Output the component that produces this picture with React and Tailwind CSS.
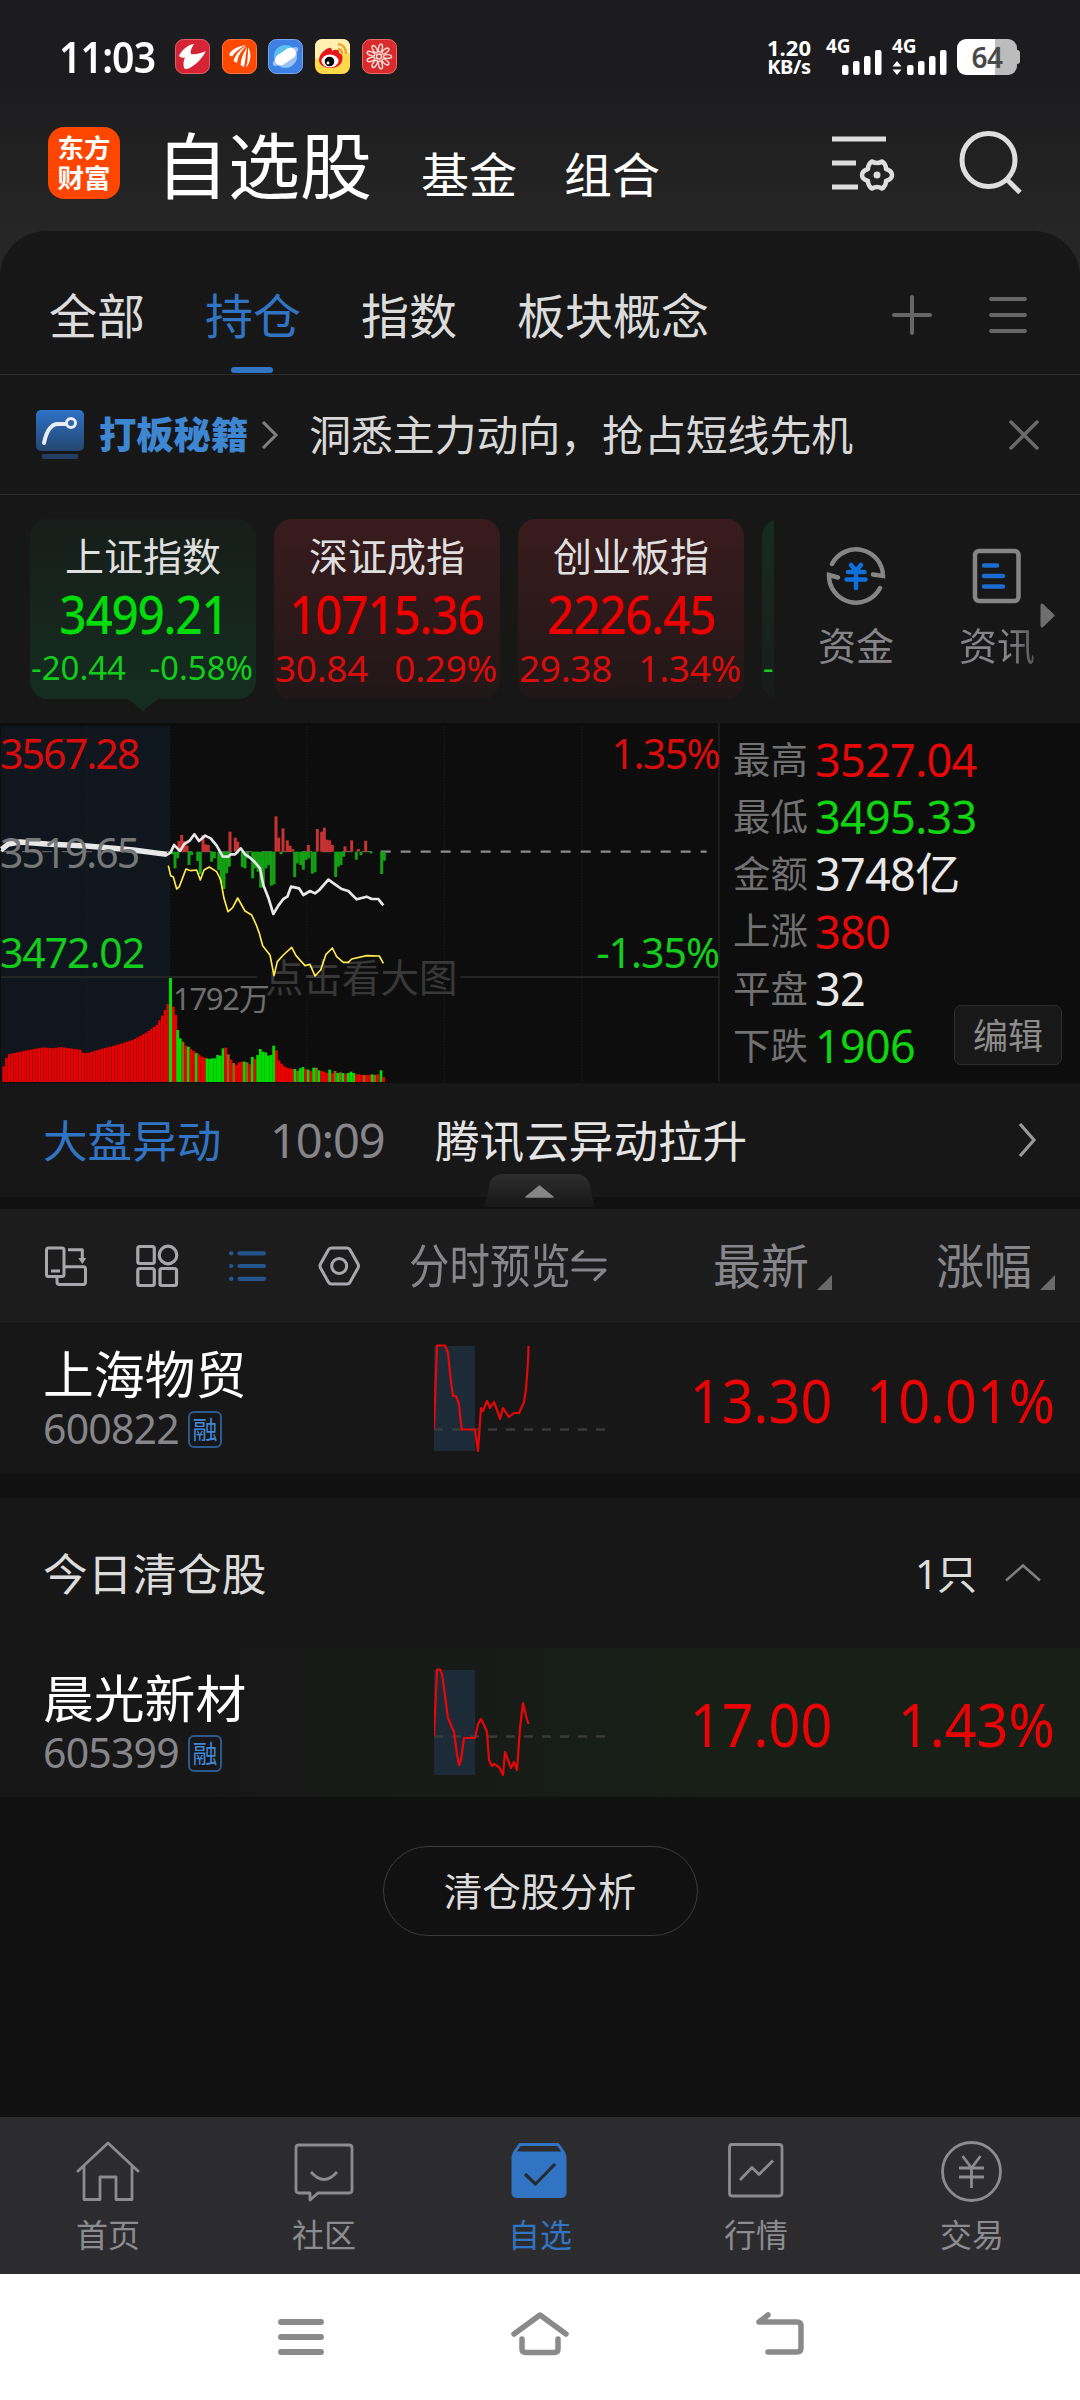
import React from "react";

const VOLUME_PRE = [
  [8, 1065], [16, 1035], [25, 1018], [80, 1006], [130, 997], [160, 1000], [180, 996], [240, 1004],
  [252, 1016], [270, 1012], [300, 1003], [350, 990], [400, 974], [440, 952], [470, 930], [490, 896], [506, 860],
];

const VOLUME = [
  [520, 875, "r"], [527, 900, "r"], [533, 945, "g"], [541, 970, "g"], [549, 980, "m"], [557, 992, "r"], [565, 995, "g"],
  [573, 1002, "r"], [581, 1008, "r"], [589, 1014, "g"], [597, 1018, "r"], [605, 1025, "r"], [613, 1028, "r"],
  [621, 1030, "g"], [629, 1032, "g"], [637, 1030, "g"], [645, 1030, "g"], [653, 1020, "g"], [661, 1022, "g"],
  [669, 1000, "g"], [677, 998, "r"], [685, 1018, "m"], [693, 1034, "r"], [701, 1044, "m"], [709, 1050, "r"],
  [717, 1042, "r"], [725, 1040, "r"], [733, 1040, "g"], [741, 1042, "m"], [749, 1048, "r"], [757, 1026, "g"],
  [765, 1032, "r"], [773, 1020, "g"], [781, 1002, "g"], [789, 1010, "g"], [797, 1012, "g"], [805, 1022, "g"],
  [813, 1020, "g"], [821, 992, "g"], [829, 1006, "r"], [837, 1036, "r"], [845, 1046, "r"], [853, 1054, "r"],
  [861, 1058, "r"], [869, 1060, "r"], [877, 1062, "r"], [885, 1062, "g"], [893, 1068, "m"], [901, 1060, "g"],
  [909, 1056, "g"], [917, 1062, "r"], [925, 1064, "g"], [933, 1068, "r"], [941, 1058, "g"], [949, 1058, "m"],
  [957, 1066, "g"], [965, 1068, "r"], [973, 1070, "r"], [981, 1074, "r"], [989, 1064, "g"], [997, 1074, "r"],
  [1005, 1068, "m"], [1013, 1074, "g"], [1021, 1072, "m"], [1029, 1074, "g"], [1037, 1076, "r"], [1045, 1074, "g"],
  [1053, 1070, "g"], [1061, 1074, "g"], [1069, 1078, "r"], [1077, 1078, "r"], [1085, 1080, "r"], [1093, 1080, "m"],
  [1101, 1080, "r"], [1109, 1080, "r"], [1117, 1078, "g"], [1125, 1080, "m"], [1133, 1078, "r"], [1143, 1066, "g"],
  [1151, 1086, "r"],
];

const VOLUME_COLORS = { r: "#ee0000", g: "#00dd00", m: "#8a6a18" };

const FLOW_UP = [
  [537, 378], [545, 360], [553, 378], [561, 392], [609, 360], [617, 388], [625, 390], [690, 350], [706, 368], [713, 380],
  [828, 304], [836, 368], [849, 340], [862, 376], [870, 392], [878, 402], [925, 390], [952, 342], [965, 350],
  [973, 338], [981, 374], [989, 376], [997, 390], [1035, 394], [1055, 376], [1075, 402], [1097, 377],
];

const FLOW_DOWN = [
  [517, 418], [525, 460], [533, 430], [567, 450], [575, 420], [593, 438], [601, 478], [635, 440], [643, 430],
  [656, 465], [664, 505], [672, 522], [680, 475], [688, 455], [712, 416], [727, 456], [735, 460], [743, 430], [758, 490],
  [766, 460], [774, 470], [782, 518], [790, 518], [798, 460], [806, 450], [814, 512], [822, 508], [843, 418],
  [884, 486], [892, 445], [902, 450], [910, 464], [918, 435], [926, 430], [937, 476], [945, 472], [1007, 486],
  [1015, 455], [1023, 450], [1031, 425], [1069, 434], [1083, 420], [1113, 415], [1145, 477], [1153, 437],
];

const WHITE_LINE =
  "5,410 12,395 25,385 60,380 100,382 140,387 200,390 260,391 330,398 400,404 450,410 500,420 512,412 522,390 530,398 540,408 552,388 570,376 583,358 597,378 615,362 632,370 650,392 668,424 685,425 692,418 705,418 722,400 735,418 750,428 765,442 780,460 790,510 805,548 820,597 835,572 850,552 862,545 873,515 897,520 910,540 930,528 945,535 958,525 985,494 1005,508 1025,522 1045,528 1070,553 1100,545 1115,552 1135,552 1150,571";

const YELLOW_LINE =
  "505,452 512,482 520,486 530,522 538,515 558,462 572,467 590,465 601,495 612,465 628,456 650,470 662,495 672,550 684,590 698,578 713,549 735,588 755,600 768,628 778,655 788,692 810,720 822,782 832,740 850,720 875,697 888,722 915,752 930,748 945,783 962,765 978,718 997,699 1010,725 1030,742 1045,742 1055,732 1100,722 1138,723 1150,745";

const STATS = [
  { label: "最高", value: "3527.04", color: "text-[#e60808]" },
  { label: "最低", value: "3495.33", color: "text-[#0fd40f]" },
  { label: "金额", value: "3748亿", color: "text-[#e8e8e8]" },
  { label: "上涨", value: "380", color: "text-[#e60808]" },
  { label: "平盘", value: "32", color: "text-[#e8e8e8]" },
  { label: "下跌", value: "1906", color: "text-[#0fd40f]" },
];

const preVolumeAt = (x) => {
  for (let i = 1; i < VOLUME_PRE.length; i++) {
    const [x0, y0] = VOLUME_PRE[i - 1];
    const [x1, y1] = VOLUME_PRE[i];
    if (x <= x1) return y0 + ((y1 - y0) * (x - x0)) / (x1 - x0);
  }
  return 860;
};

const Signal = () => (
  <svg width="40" height="25" viewBox="0 0 40 25" fill="#fff">
    <rect x="0" y="15" width="6.5" height="10" rx="2" />
    <rect x="11" y="11" width="6.5" height="14" rx="2" />
    <rect x="22" y="6" width="6.5" height="19" rx="2" />
    <rect x="33" y="0" width="6.5" height="25" rx="2" />
  </svg>
);

const AppBadges = () => (
  <div className="ml-[17px] flex gap-[11.7px]">
    <svg width="35" height="35" viewBox="0 0 35 35">
      <rect x=".5" y=".5" width="34" height="34" rx="8" fill="#d42435" stroke="#e0606c" />
      <path d="M19 5 C12 6 6 12 4 17 C6 19 9 19 10 18 C8 23 8 28 10 30 C15 31 26 22 31 12 C27 14 20 16 16 15 C15 12 17 8 19 5z" fill="#fff" />
    </svg>
    <svg width="35" height="35" viewBox="0 0 35 35">
      <rect x=".5" y=".5" width="34" height="34" rx="8" fill="#ff4800" stroke="#ff7a45" />
      <path d="M24 6 C17 7 9 10 7 16 L10 17.500 C13 13 18 9 24 6z M24.500 7 C18 10 13 16 11.500 22 L15 24 C16 17 19 12 24.500 7z M25 8 C22 13 19 19 18.500 26 L22 28 C23.500 21 24 14 25 8z M26 8 C26 15 26 22 24 29 C29 23 30 14 26 8z" fill="#fff" />
    </svg>
    <svg width="35" height="35" viewBox="0 0 35 35">
      <rect x=".5" y=".5" width="34" height="34" rx="8" fill="#3f80e4" stroke="#76a6ee" />
      <circle cx="17.500" cy="17.500" r="11.500" fill="#5bc0ee" />
      <path d="M8 23 A11.500 11.500 0 0 0 28.500 20 L29 14z" fill="#9fc0f4" />
      <ellipse cx="17.500" cy="17.500" rx="15" ry="5" transform="rotate(-34 17.500 17.500)" fill="#9fc0f4" />
      <rect x="6" y="12" width="23" height="11" rx="5.500" transform="rotate(-34 17.500 17.500)" fill="#fff" />
    </svg>
    <svg width="35" height="35" viewBox="0 0 35 35">
      <rect width="35" height="35" rx="8" fill="#ffd94a" />
      <path d="M0 20 V8 Q0 0 8 0 H27 Q35 0 35 8 V14z" fill="#ffefb0" />
      <path d="M4 21 C4 15 10 10 14 9 C17 8 17 11 17 12 C20 10 25 10 24 14 C28 15 28 19 27 22 C25 32 4 31 4 21z" fill="#e6161b" />
      <ellipse cx="15" cy="22" rx="8.500" ry="6.500" fill="#fff" />
      <circle cx="14.500" cy="22.500" r="4.800" fill="#000" />
      <circle cx="13" cy="24" r="1.400" fill="#fff" />
      <path d="M23 5 Q31 6 31 15 M23 10 Q27 10 27 15" stroke="#f2a52a" strokeWidth="2.500" fill="none" />
    </svg>
    <svg width="35" height="35" viewBox="0 0 35 35">
      <rect x=".5" y=".5" width="34" height="34" rx="8" fill="#d92b2d" stroke="#ee6a66" />
      <g fill="none" stroke="#ffe3dc" strokeWidth="1.400">
        {[10, 50, 90, 130, 170, 210, 250, 290, 330].map((a) => (
          <ellipse key={a} cx="17" cy="9" rx="1.900" ry="4" transform={`rotate(${a} 17 17.500)`} />
        ))}
        <circle cx="17" cy="17.500" r="2.500" />
      </g>
    </svg>
  </div>
);

const StatusBar = () => (
  <div className="flex h-[113px] items-center pl-[59px] pr-[60px] text-white">
    <span className="w-[99px]">
      <span className="inline-block origin-left scale-x-[0.91] whitespace-nowrap text-[43px] font-semibold leading-none tracking-[-0.9px]">
        11:03
      </span>
    </span>
    <AppBadges />
    <div className="ml-auto flex items-center">
      <div className="w-[44px] whitespace-nowrap text-center text-[22px] font-bold leading-[20px]">
        <div>1.20</div>
        <div className="text-[20px] tracking-[-0.3px]">KB/s</div>
      </div>
      <div className="ml-[15px] flex h-[36px] w-[56px] items-start">
        <span className="w-[24px] text-[19px] font-bold leading-[15px]">4G</span>
        <div className="-ml-[8px] mt-[11px]">
          <Signal />
        </div>
      </div>
      <div className="ml-[10px] flex h-[36px] w-[55px] items-start">
        <span className="w-[24px] text-[19px] font-bold leading-[15px]">4G</span>
        <svg className="-ml-[24px] mr-[5px] mt-[22px] shrink-0" width="10" height="14" viewBox="0 0 10 14" fill="#fff">
          <path d="M5 0 L9.500 5.500 H.5z M5 14 L.5 8.500 H9.500z" />
        </svg>
        <div className="mt-[11px] shrink-0">
          <Signal />
        </div>
      </div>
      <div className="ml-[10px] flex items-center">
        <div className="flex h-[36px] w-[60px] items-center justify-center rounded-[9px] bg-[linear-gradient(90deg,#fff_63%,#bcbcbc_63%)] text-[28px] font-semibold leading-none tracking-[-0.5px] text-[#484848]">
          64
        </div>
        <div className="h-[14px] w-[3px] rounded-r-[3px] bg-[#bcbcbc]" />
      </div>
    </div>
  </div>
);

const Header = () => (
  <div className="flex h-[118px] items-start pl-[48px] pr-[57px] text-white">
    <div className="mt-[14px] flex size-[72px] flex-col items-center justify-center rounded-[16px] bg-[#ff4600] text-[26.5px] font-bold leading-[30px]">
      <span>东方</span>
      <span>财富</span>
    </div>
    <span className="ml-[36px] mt-[12px] text-[72px] leading-[80px]">自选股</span>
    <span className="ml-[49px] mt-[37px] text-[48px] leading-[50px]">基金</span>
    <span className="ml-[47px] mt-[37px] text-[48px] leading-[50px]">组合</span>
    <svg className="ml-auto mt-[20px]" width="66" height="62" viewBox="0 0 66 62" fill="none" stroke="#dedede" strokeWidth="5">
      <path d="M0 6 H54 M0 30 H24 M0 54 H26" />
      <path
        d="M36 36 Q36 31 40 28.500 Q45 31.500 50 28.500 Q54 31 54 36 Q60 38 60 42 Q60 46 54 48 Q54 53 50 55.500 Q45 52.500 40 55.500 Q36 53 36 48 Q30 46 30 42 Q30 38 36 36z"
        strokeWidth="4.500"
        strokeLinejoin="round"
      />
      <circle cx="45" cy="42" r="3.500" fill="#dedede" stroke="none" />
    </svg>
    <svg className="ml-[61px] mt-[16px]" width="64" height="66" viewBox="0 0 64 66" fill="none" stroke="#dedede" strokeWidth="5">
      <circle cx="29.500" cy="31" r="26.500" />
      <path d="M47.500 50 L61 63.500" />
    </svg>
  </div>
);

const Tabs = () => (
  <div className="flex h-[144px] items-center gap-[60px] border-b border-[#2e2e2e] pl-[49px] pr-[53px] text-[48px] leading-none text-[#dcdcdc]">
    <span className="-mt-[2px] pt-[28px]">全部</span>
    <span className="relative -mt-[2px] pt-[28px] text-[#3174c4]">
      持仓
      <span className="absolute bottom-[-33px] left-[26px] h-[6px] w-[42px] rounded-[3px] bg-[#3174c4]" />
    </span>
    <span className="-mt-[2px] pt-[28px]">指数</span>
    <span className="-mt-[2px] pt-[28px]">板块概念</span>
    <div className="ml-auto mt-[24px] flex items-center gap-[57px]">
      <svg width="40" height="40" viewBox="0 0 40 40" stroke="#666" strokeWidth="4" strokeLinecap="round">
        <path d="M2 20 H38 M20 2 V38" />
      </svg>
      <svg width="38" height="40" viewBox="0 0 38 40" stroke="#666" strokeWidth="4" strokeLinecap="round">
        <path d="M2 4 H36 M2 20 H36 M2 36 H36" />
      </svg>
    </div>
  </div>
);

const Promo = () => (
  <div className="flex h-[120px] items-center border-b border-[#2a2a2a] pl-[36px] pr-[41px]">
    <svg width="48" height="50" viewBox="0 0 48 50">
      <defs>
        <linearGradient id="promo" x1="0" y1="0" x2="0" y2="1">
          <stop offset="0" stopColor="#2d72c8" />
          <stop offset="1" stopColor="#25466f" />
        </linearGradient>
      </defs>
      <rect width="48" height="41" rx="5" fill="url(#promo)" />
      <path d="M8 33 Q12 14 22 14 H30" fill="none" stroke="#e8eef6" strokeWidth="4" strokeLinecap="round" />
      <circle cx="35" cy="13" r="4.500" fill="none" stroke="#e8eef6" strokeWidth="3" />
      <rect x="6" y="44" width="36" height="5" rx="1.500" fill="#223f63" />
    </svg>
    <span className="ml-[15px] text-[37.3px] font-black leading-none text-[#3c86d2]">打板秘籍</span>
    <svg className="ml-[13px]" width="18" height="28" viewBox="0 0 18 28" fill="none" stroke="#808080" strokeWidth="3">
      <path d="M2 1 L15 14 L2 27" />
    </svg>
    <span className="ml-[30px] text-[41.85px] leading-none text-[#d8d8d8]">洞悉主力动向，抢占短线先机</span>
    <svg className="ml-auto" width="30" height="30" viewBox="0 0 30 30" stroke="#6a6a6a" strokeWidth="3.500" strokeLinecap="round">
      <path d="M2 2 L28 28 M28 2 L2 28" />
    </svg>
  </div>
);

const IndexCard = ({ name, price, change, percent, up, active }) => (
  <div
    className={
      "relative flex h-[180px] w-[226px] shrink-0 flex-col items-center rounded-[18px] bg-linear-to-b whitespace-nowrap " +
      (up ? "from-[#3a1b1d] to-[#211718]" : active ? "from-[#171d1a] to-[#142d20]" : "from-[#142d20] to-[#171d1a]")
    }
  >
    <span className="mt-[17px] h-[40px] text-[39px] leading-[40px] text-[#dfdfdf]">{name}</span>
    <span
      className={
        "mt-[12px] h-[52px] scale-x-[0.92] text-[52px] font-medium leading-[52px] tracking-[-1.4px] " +
        (up ? "text-[#ec0000]" : "text-[#00dc0a]")
      }
    >
      {price}
    </span>
    <div
      className={
        "mt-[8px] flex w-full justify-between pl-[1px] pr-[3px] leading-[40px] " +
        (up ? "text-[37px] tracking-[-0.3px] text-[#d90c0c]" : "text-[33px] text-[#14cc1c]")
      }
    >
      <span>{change}</span>
      <span>{percent}</span>
    </div>
    {active && (
      <svg className="absolute left-[98px] top-[180px]" width="30" height="12" viewBox="0 0 30 12">
        <path d="M0 0 H30 L15 12z" fill="#142d20" />
      </svg>
    )}
  </div>
);

const IndexStrip = () => (
  <div className="flex h-[228px] items-start pt-[24px]">
    <div className="flex h-[200px] w-[774px] shrink-0 gap-[18px] overflow-hidden pl-[30px]">
      <IndexCard name="上证指数" price="3499.21" change="-20.44" percent="-0.58%" active />
      <IndexCard name="深证成指" price="10715.36" change="30.84" percent="0.29%" up />
      <IndexCard name="创业板指" price="2226.45" change="29.38" percent="1.34%" up />
      <IndexCard name="" price="" change="-" percent="" />
    </div>
    <div className="ml-[43px] mt-[26px] flex w-[78px] flex-col items-center text-[38px] leading-[40px] text-[#858589]">
      <svg width="60" height="62" viewBox="0 0 60 62" fill="none" stroke="#858585" strokeWidth="4.500" strokeLinecap="round">
        <path d="M6 19 A27 27 0 0 1 57 31 L47 29.500" />
        <path d="M54 43 A27 27 0 0 1 3 30 L12 32.500" />
        <path d="M25 20 L30 26 L35 20 M22 27 H38.500 M20.500 34.500 H39.500 M30 26 V43" stroke="#0f70dc" />
      </svg>
      <span className="mt-[18px]">资金</span>
    </div>
    <div className="ml-[63px] mt-[26px] flex w-[78px] flex-col items-center text-[38px] leading-[40px] text-[#858589]">
      <svg width="50" height="62" viewBox="0 0 50 62" fill="none" strokeWidth="4.500" strokeLinecap="round">
        <rect x="3" y="6" width="43.500" height="50" rx="4" stroke="#858585" />
        <path d="M12 20.500 H25 M12 31 H31 M12 41.500 H31" stroke="#1a6cd0" />
      </svg>
      <span className="mt-[18px] bg-linear-to-r from-[#858589] from-65% to-[#555558] bg-clip-text text-transparent">资讯</span>
    </div>
    <svg className="ml-[4px] mt-[84px] shrink-0" width="15" height="25" viewBox="0 0 15 25">
      <path d="M2 2 L13 12.500 L2 23z" fill="#6e6e6e" stroke="#6e6e6e" strokeWidth="3" strokeLinejoin="round" />
    </svg>
  </div>
);

const MarketChart = () => {
  const preBars = [];
  for (let x = 11; x < 506; x += 8.2) preBars.push([x, preVolumeAt(x)]);

  return (
    <div className="relative h-[359px] w-[720px] shrink-0 border-r-2 border-[#1c1c1c]">
      <svg className="absolute left-0 top-0" width="720" height="359" viewBox="0 24 2160 1077">
        <rect x="3" y="34" width="506" height="1067" fill="#10161e" />
        <g stroke="#272727" strokeWidth="3" strokeDasharray="3 6">
          <path d="M260 34 V1101 M509 34 V1101 M921 34 V720 M921 856 V1101 M1333 34 V1101 M1746 34 V1101" />
        </g>
        <path d="M3 786 H770 M1382 786 H2157" stroke="#242424" strokeWidth="6" />
        <path d="M6 410 H1150" stroke="#5b5b5b" strokeWidth="4" strokeDasharray="30 30" />
        <path d="M1142 410 H2120" stroke="#8c8c8c" strokeWidth="7" strokeDasharray="30 30" />
        {FLOW_UP.map(([x, y]) => (
          <rect key={x} x={x - 4.5} y={y} width="9" height={410 - y} fill="#c83232" />
        ))}
        {FLOW_DOWN.map(([x, y]) => (
          <rect key={x} x={x - 4.5} y="410" width="9" height={y - 410} fill="#14a014" />
        ))}
        {preBars.map(([x, y]) => (
          <rect key={x} x={x - 3.7} y={y} width="7.400" height={1101 - y} fill="#ee0000" />
        ))}
        {VOLUME.map(([x, y, c]) => (
          <rect key={x} x={x - 4.2} y={y} width="8.400" height={1101 - y} fill={VOLUME_COLORS[c]} />
        ))}
        <rect x="507" y="789" width="9" height="312" fill="#00dd00" />
      </svg>
      <span className="absolute left-[265px] top-[234px] text-[38.5px] leading-[40px] text-[#383838]">点击看大图</span>
      <span className="absolute left-[173px] top-[258px] text-[31px] leading-[34px] tracking-[-1.3px] text-[#6e6e6e]">1792万</span>
      <svg className="absolute left-0 top-0" width="720" height="359" viewBox="0 24 2160 1077" fill="none" strokeLinejoin="round">
        <polyline points="5,403 25,387 60,381 140,387 260,393 400,405 500,418" stroke="#e8e8e8" strokeWidth="16" />
        <polyline points={WHITE_LINE} stroke="#e8e8e8" strokeWidth="8" />
        <polyline points={YELLOW_LINE} stroke="#ffe94e" strokeWidth="5" />
      </svg>
      <div className="absolute left-0 top-0 text-[41px] leading-[40px] tracking-[-1.9px]">
        <span className="absolute left-0 top-[10px] text-[#d90c0c]">3567.28</span>
        <span className="absolute left-0 top-[109px] text-[#777]">3519.65</span>
        <span className="absolute left-0 top-[209px] tracking-[-1.1px] text-[#14cc1c]">3472.02</span>
      </div>
      <div className="absolute right-[-1px] top-0 text-[41px] leading-[40px] tracking-[-1.6px]">
        <span className="absolute right-0 top-[10px] text-[#d90c0c]">1.35%</span>
        <span className="absolute right-0 top-[209px] whitespace-nowrap tracking-[-1px] text-[#14cc1c]">-1.35%</span>
      </div>
    </div>
  );
};

const MarketPanel = () => (
  <div className="relative flex h-[360px] bg-[#0d0d0d]">
    <MarketChart />
    <div className="flex flex-col pl-[13px] pt-[8px]">
      {STATS.map((s) => (
        <div key={s.label} className="flex h-[57.2px] items-center">
          <span className="w-[82px] text-[37.4px] leading-none text-[#717171]">{s.label}</span>
          <span className={"text-[45px] leading-none tracking-[-0.7px] " + s.color}>{s.value}</span>
        </div>
      ))}
    </div>
    <button className="absolute left-[954px] top-[282px] h-[60px] w-[108px] rounded-[7px] border border-[#2c2c2c] bg-[#181818] text-[35px] leading-none text-[#8c8c8c]">
      编辑
    </button>
  </div>
);

const Movement = () => (
  <div className="relative flex h-[114px] items-center pl-[43px] pr-[43px] text-[44.6px] leading-none">
    <span className="mt-[2px] w-[227px] text-[#3174c4]">大盘异动</span>
    <span className="w-[165px] text-[47px] tracking-[-1.1px] text-[#85858a]">10:09</span>
    <span className="mt-[2px] text-[#e4e4e4]">腾讯云异动拉升</span>
    <svg className="ml-auto" width="19" height="34" viewBox="0 0 19 34" fill="none" stroke="#999" strokeWidth="3.200">
      <path d="M2 1 L16 17 L2 33" />
    </svg>
    <svg className="absolute left-[484px] top-[91px] z-10" width="111" height="33" viewBox="0 0 111 33">
      <defs>
        <linearGradient id="handle" x1="0" y1="0" x2="0" y2="1">
          <stop offset="0" stopColor="#2e2e2e" />
          <stop offset="1" stopColor="#171717" />
        </linearGradient>
      </defs>
      <path d="M0 33 Q4 20 5 12 Q7 0 20 0 H91 Q104 0 106 12 Q107 20 111 33z" fill="url(#handle)" />
      <path d="M55.500 12 L69 23 H42z" fill="#868686" stroke="#868686" strokeWidth="1.500" strokeLinejoin="round" />
    </svg>
  </div>
);

const Corner = () => (
  <svg className="ml-[8px] mt-[34px]" width="15" height="15" viewBox="0 0 15 15">
    <path d="M15 0 V15 H0z" fill="#6a6a6a" />
  </svg>
);

const Toolbar = () => (
  <div className="flex h-[114px] items-center bg-[#1c1c1c] pl-[44px] pr-[25px] text-[#86868a]">
    <svg width="44" height="44" viewBox="0 0 44 44" fill="none" stroke="#a8a8ac" strokeWidth="3" strokeLinejoin="round">
      <rect x="2.500" y="4" width="17.500" height="28.500" rx="2" />
      <path d="M7 27 H16 M24 5.700 H38.300 V15" />
      <path d="M34.300 14 H42.300 L38.300 20z" fill="#a8a8ac" stroke="none" />
      <path d="M20 22.700 H39.500 Q41.500 22.700 41.500 25 V38 Q41.500 40.500 39 40.500 H15.500 Q13 40.500 13 38 V33" />
    </svg>
    <svg className="ml-[47px]" width="44" height="44" viewBox="0 0 44 44" fill="none" stroke="#a8a8ac" strokeWidth="3.200">
      <rect x="2.800" y="2.500" width="16.500" height="17" rx="2" />
      <circle cx="33" cy="11" r="8.800" />
      <rect x="2.800" y="24.500" width="16.500" height="17" rx="2" />
      <rect x="25" y="24.500" width="16.500" height="17" rx="2" />
    </svg>
    <svg className="ml-[49px]" width="40" height="44" viewBox="0 0 40 44" stroke="#24558f" strokeWidth="4.200" strokeLinecap="round">
      <path d="M3 9.300 H3.500 M11.500 9.300 H36 M3 22 H3.500 M11.500 22 H36 M3 34.800 H3.500 M11.500 34.800 H36" />
    </svg>
    <svg className="ml-[49px]" width="44" height="44" viewBox="0 0 44 44" fill="none" stroke="#a8a8ac" strokeWidth="3">
      <path d="M14.500 4 H30 Q32 4 33 5.800 L41 20 Q42 22 41 24 L33 38.200 Q32 40 30 40 H14.500 Q12.500 40 11.500 38.200 L3.500 24 Q2.500 22 3.500 20 L11.500 5.800 Q12.500 4 14.500 4z" />
      <circle cx="22.200" cy="22" r="7.500" />
    </svg>
    <div className="-mt-[2px] ml-[48px] w-[162px]">
      <span className="inline-block origin-left scale-x-[0.87] whitespace-nowrap text-[46.5px] leading-[48px]">分时预览</span>
    </div>
    <svg width="36" height="32" viewBox="0 0 36 32" fill="none" stroke="#86868a" strokeWidth="3.200" strokeLinecap="round" strokeLinejoin="round">
      <path d="M34 10 H2 L11.500 1.500 M2 20 H34 L24 29.500" />
    </svg>
    <div className="-mt-[1px] ml-auto flex items-center text-[48px] leading-[50px]">
      <span>最新</span>
      <Corner />
      <span className="ml-[104px]">涨幅</span>
      <Corner />
    </div>
  </div>
);

const StockRow = ({ name, code, price, percent, baseline, points, className }) => (
  <div className={"flex h-[149px] pl-[43px] pr-[25px] " + className}>
    <div className="w-[391px] pt-[23px]">
      <div className="text-[50.8px] leading-[56px] text-white">{name}</div>
      <div className="mt-[5px] flex h-[40px] items-center">
        <span className="w-[145px] text-[41px] leading-[40px] tracking-[-0.8px] text-[#85858a]">{code}</span>
        <span className="mt-[2px] flex h-[37px] w-[34px] items-center justify-center rounded-[6px] border-2 border-[#2c5a90] text-[25px] leading-none text-[#4187d6]">
          融
        </span>
      </div>
    </div>
    <svg className="mt-[20px] shrink-0" width="172" height="110" viewBox="0 0 172 110" fill="none">
      <rect x="0" y="2" width="41" height="105" fill="#1d2b39" />
      <path d={`M0 ${baseline} H172`} stroke="#3a3a3a" strokeWidth="2.500" strokeDasharray="9 9" />
      <polyline points={points} stroke="#e60808" strokeWidth="2.200" strokeLinejoin="round" />
    </svg>
    <div className="ml-auto flex items-center pt-[3px] text-[60px] leading-none text-[#e80404]">
      <span className="origin-right scale-x-[0.93]">{price}</span>
      <span className="w-[223px] text-right">
        <span className="-ml-4 inline-block origin-right scale-x-[0.93]">{percent}</span>
      </span>
    </div>
  </div>
);

const NAV = [
  {
    label: "首页",
    icon: (
      <path d="M2 32 L33 3 L64 32 M9 26 V59.500 H25 V37 H41 V59.500 H57 V26" />
    ),
  },
  {
    label: "社区",
    icon: (
      <path d="M8 5 H58 Q61 5 61 8 V50 Q61 53 58 53 H27 L19 60 V53 H8 Q5 53 5 50 V8 Q5 5 8 5z M20 32 Q33 47 46 32" />
    ),
  },
  {
    label: "自选",
    active: true,
    icon: (
      <>
        <path d="M13 4.500 H51 L57 13 H7z" strokeWidth="3" />
        <rect x="4.500" y="12" width="55" height="46" rx="5" fill="#3174c4" stroke="none" />
        <path d="M18 34 L28.500 44 L48 24" stroke="#262b33" strokeWidth="3.200" />
      </>
    ),
  },
  {
    label: "行情",
    icon: (
      <path d="M9 4.500 H56 Q59 4.500 59 7.500 V53 Q59 56 56 56 H9 Q6.500 56 6.500 53 V7.500 Q6.500 4.500 9 4.500z M17 40 L29 27.500 L36 34.500 L50 20.500" />
    ),
  },
  {
    label: "交易",
    icon: (
      <>
        <circle cx="32.500" cy="31.500" r="29" />
        <path d="M23.500 16 L32.500 28 L41.500 16 M20 28 H45 M20 37 H45 M32.500 28 V48" />
      </>
    ),
  },
];

const BottomNav = () => (
  <div className="flex h-[157px] bg-[#2c2c2e]">
    {NAV.map((item) => (
      <div
        key={item.label}
        className={"flex flex-1 flex-col items-center pt-[23px] text-[32px] leading-[36px] " + (item.active ? "text-[#3174c4]" : "text-[#8b8b90]")}
      >
        <svg width="66" height="64" viewBox="0 0 66 64" fill="none" stroke="currentColor" strokeWidth="2.800" strokeLinejoin="round">
          {item.icon}
        </svg>
        <span className="mt-[13px]">{item.label}</span>
      </div>
    ))}
  </div>
);

const SystemBar = () => (
  <div className="flex h-[126px] items-start justify-center gap-[185px] bg-white pl-[2px] pt-[37px]">
    <svg width="48" height="46" viewBox="0 0 48 46" stroke="#8a8a8a" strokeWidth="5.800" strokeLinecap="round">
      <path d="M4 11 H44 M4 26 H44 M4 41 H44" />
    </svg>
    <svg width="60" height="46" viewBox="0 0 60 46" fill="none" stroke="#8a8a8a" strokeWidth="5.500" strokeLinecap="round" strokeLinejoin="round">
      <path d="M4 23 L30 4 L56 23" />
      <path d="M12 28 V38 Q12 41.500 16 41.500 H44 Q48 41.500 48 38 V28" />
    </svg>
    <svg width="50" height="46" viewBox="0 0 50 46" fill="none" stroke="#8a8a8a" strokeWidth="5.500" strokeLinecap="round" strokeLinejoin="round">
      <path d="M13 4 L4 11 H42 Q46 11 46 15 V37 Q46 41 42 41 H13" />
    </svg>
  </div>
);

const App = () => {
  return (
    <div className="h-[2400px] w-[1080px] overflow-hidden bg-[#111] font-['Noto_Sans','Noto_Sans_CJK_SC',sans-serif]">
      <div className="bg-linear-to-b from-[#1c1c1e] from-35% to-[#262626]">
        <StatusBar />
        <Header />
      </div>
      <div className="bg-[#262626]">
        <div className="rounded-t-[46px] bg-[#171717]">
          <Tabs />
          <Promo />
          <IndexStrip />
          <MarketPanel />
          <Movement />
        </div>
      </div>
      <div className="mt-[12px]">
        <Toolbar />
      </div>
      <StockRow
        className="mt-px bg-[#171717]"
        name="上海物贸"
        code="600822"
        price="13.30"
        percent="10.01%"
        baseline={85.5}
        points="0,85 3,1.500 11,1.500 14,9 17,38 19,52 22,52 25,60 27,80 28,85.500 41,85.500 44,107 47,64 49,67 53,57 56,64 60,58 63,66 66,75 69,64 75,73 80,69 85,69 90,58 92,45 94,18 94.500,2"
      />
      <div className="mt-[25px] flex h-[150px] items-center bg-[#171717] pl-[43px] pr-[39px] pt-[2px] text-[44.7px] leading-none text-[#dcdcdc]">
        <span>今日清仓股</span>
        <span className="ml-auto text-[40px] tracking-[-1px]">1只</span>
        <svg className="-mt-[2px] ml-[29px]" width="36" height="20" viewBox="0 0 36 20" fill="none" stroke="#808080" strokeWidth="2.500">
          <path d="M1 17.500 L18 2.500 L35 17.500" />
        </svg>
      </div>
      <StockRow
        className="bg-linear-to-r from-[#171717] from-20% to-[#171f17] to-65%"
        name="晨光新材"
        code="605399"
        price="17.00"
        percent="1.43%"
        baseline={68.5}
        points="0,68 3,1.500 6,1.500 8,6 11,28 14,50 20,64 23,86 25,97 27,92 30,70 41,70 44,56 47,51 50,57 53,64 55,92 58,98 60,96 65,99 69,107 71,84 74,92 77,100 80,94 83,102 86,60 89,35 92,48 94.500,56"
      />
      <div className="flex h-[320px] justify-center pt-[49px]">
        <button className="h-[90px] w-[315px] rounded-full border-[1.500px] border-[#3a3a3a] text-[38.5px] leading-none text-[#dcdcdc]">
          清仓股分析
        </button>
      </div>
      <BottomNav />
      <SystemBar />
    </div>
  );
};

export default App;
